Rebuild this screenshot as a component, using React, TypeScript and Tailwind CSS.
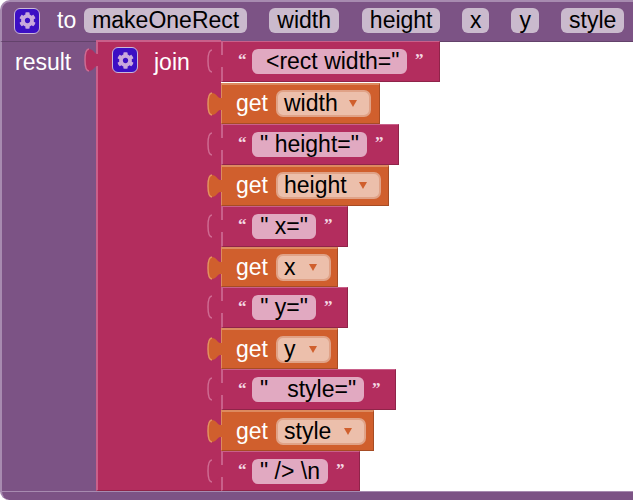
import { FaCog } from "react-icons/fa";

function Gear() {
    return (
        <div className="w-[26px] h-[26px] shrink-0 rounded-[6px] bg-[#3c0fc4] border border-[#cbb8d8] flex items-center justify-center">
            <FaCog className="w-[17px] h-[17px] text-[#c9a9dc]" />
        </div>
    );
}

function Tab({ fill, edge, className }: { fill: string; edge: string; className: string }) {
    return (
        <svg width="16" height="24" viewBox="0 0 16 24" className={"absolute " + className}>
            <path d="M16 6 L13 6 C11 6 9 1 5 1 C2 1 1 5 1 12 C1 19 2 23 5 23 C9 23 11 18 13 18 L16 18 Z" fill={fill} />
            <path d="M5 1 C2 1 1 5 1 12 C1 19 2 23 5 23" fill="none" stroke={edge} strokeWidth="1.500" />
        </svg>
    );
}

function HeaderPill({ label, className }: { label: string; className: string }) {
    return (
        <div className={"h-[25px] rounded-[6px] bg-[#cabacd] flex items-center justify-center text-black " + className}>
            {label}
        </div>
    );
}

function TextRow({ label, width, pill, height = "h-[41px]" }: { label: string; width: string; pill: string; height?: string }) {
    return (
        <div className={"relative pl-[15px] bg-[#b32d5e] border-t border-t-[#c9608a] border-l-2 border-l-[#c9608a] border-r border-r-[#8f2449] border-b border-b-[#8f2449] flex items-center " + width + " " + height}>
            <Tab fill="#b32d5e" edge="#cf6b92" className="left-[-16px] top-[7px]" />
            <span className="w-[14px] text-[#f3d9e3] text-[17px] leading-none font-bold mt-[-3px] font-['Liberation_Serif',serif]">“</span>
            <div className={"h-[25px] rounded-[6px] bg-[#e1a9c1] flex items-center justify-center whitespace-pre text-black " + pill}>
                {label}
            </div>
            <span className="ml-[8px] text-[#f3d9e3] text-[17px] leading-none font-bold mt-[-3px] font-['Liberation_Serif',serif]">”</span>
        </div>
    );
}

function GetRow({ label, width, pill, gap = "" }: { label: string; width: string; pill: string; gap?: string }) {
    return (
        <div className={"relative h-[41px] pl-[14px] bg-[#d05f2d] border-t-2 border-t-[#dd8a5f] border-l border-l-[#dd8a5f] border-r border-r-[#a64c24] border-b border-b-[#a64c24] flex items-center " + width + " " + gap}>
            <Tab fill="#d05f2d" edge="#e3935f" className="left-[-15px] top-[7px]" />
            <span className="w-[40px] text-white">get</span>
            <div className={"h-[27px] pl-[6px] pr-[12px] rounded-[7px] bg-[#ecbfab] border-2 border-[#e0a287] flex items-center justify-between text-black " + pill}>
                <span>{label}</span>
                <span className="w-0 h-0 border-l-[4px] border-r-[4px] border-t-[7px] border-l-transparent border-r-transparent border-t-[#d05f2d]" />
            </div>
        </div>
    );
}

export default function App() {
    return (
        <div className="w-[633px] h-[500px] overflow-hidden bg-white flex flex-col text-[23px] leading-none font-['Liberation_Sans',Arial,sans-serif]">
            <div className="h-[42px] shrink-0 pl-[14px] pb-[2px] flex items-center bg-[#7c5385] rounded-tl-[10px] border-t-2 border-t-[#a78bb0] border-l-2 border-l-[#a78bb0] border-b border-b-[#63426b]">
                <div className="-ml-[2px]">
                    <Gear />
                </div>
                <span className="ml-[17px] text-white">to</span>
                <HeaderPill label="makeOneRect" className="ml-[8px] w-[163px]" />
                <HeaderPill label="width" className="ml-[22px] w-[70px]" />
                <HeaderPill label="height" className="ml-[23px] w-[78px]" />
                <HeaderPill label="x" className="ml-[22px] w-[27px]" />
                <HeaderPill label="y" className="ml-[22px] w-[28px]" />
                <HeaderPill label="style" className="ml-[22px] w-[63px]" />
            </div>
            <div className="flex h-[449px] shrink-0">
                <div className="w-[96px] shrink-0 bg-[#7c5385] border-l-2 border-l-[#a78bb0] pl-[13px] pt-[9px] text-white">
                    result
                </div>
                <div className="relative w-[125px] shrink-0 bg-[#b32d5e] border-t-2 border-t-[#c9608a] border-l-2 border-l-[#c9608a] border-b border-b-[#8f2449] flex items-start gap-[16px] pl-[14px] pt-[5px] -mt-[2px] h-[451px]">
                    <Tab fill="#b32d5e" edge="#cf6b92" className="left-[-14px] top-[6px]" />
                    <Gear />
                    <span className="mt-[4px] text-white">join</span>
                </div>
                <div className="flex flex-col items-start -mt-[1px]">
                    <TextRow label={' <rect width="'} width="w-[219px]" pill="w-[155px]" />
                    <GetRow label="width" width="w-[159px]" pill="w-[95px]" gap="mt-[1px]" />
                    <TextRow label={'" height="'} width="w-[178px]" pill="w-[115px]" />
                    <GetRow label="height" width="w-[168px]" pill="w-[105px]" />
                    <TextRow label={'" x="'} width="w-[127px]" pill="w-[64px]" />
                    <GetRow label="x" width="w-[117px]" pill="w-[55px]" />
                    <TextRow label={'" y="'} width="w-[127px]" pill="w-[64px]" />
                    <GetRow label="y" width="w-[117px]" pill="w-[55px]" />
                    <TextRow label={'"   style="'} width="w-[175px]" pill="w-[112px]" />
                    <GetRow label="style" width="w-[153px]" pill="w-[90px]" />
                    <TextRow label={'" /> \\n'} width="w-[139px]" pill="w-[76px]" height="h-[40px]" />
                </div>
            </div>
            <div className="flex-1 bg-[#7c5385] border-t border-t-[#a78bb0] border-l-2 border-l-[#a78bb0] rounded-bl-[10px]" />
        </div>
    );
}
